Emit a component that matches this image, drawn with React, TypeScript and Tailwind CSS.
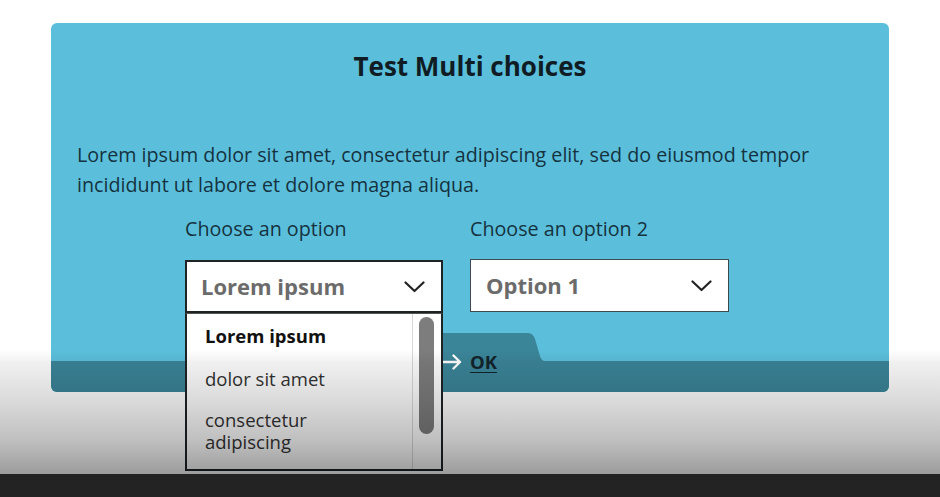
import React from "react";

function Chevron() {
  return (
    <svg width="21" height="12" viewBox="0 0 21 12" fill="none" className="shrink-0">
      <path d="M1.5 1.5 L10.5 10 L19.5 1.5" stroke="#222" strokeWidth="2.2" strokeLinecap="round" strokeLinejoin="round" />
    </svg>
  );
}

function Arrow() {
  return (
    <svg width="20" height="16" viewBox="0 0 20 16" fill="none" className="shrink-0">
      <path d="M1.5 8 H18 M11.5 1.5 L18 8 L11.5 14.5" stroke="#ffffff" strokeWidth="2.4" strokeLinecap="round" strokeLinejoin="round" />
    </svg>
  );
}

export default function App() {
  return (
    <div
      className="relative flex h-[497px] w-[940px] flex-col overflow-hidden bg-white"
      style={{ fontFamily: '"Open Sans", "Noto Sans", sans-serif' }}
    >
      <div className="flex-1 pt-[23px]">
        <div className="mx-auto w-[838px] rounded-[6px] bg-[#5bbfdb]">
          <div className="px-[26px] pt-[25px]">
            <h1 className="text-center text-[26px] font-bold leading-[36px] text-[#101c24]">
              Test Multi choices
            </h1>
            <p className="mt-[56px] text-[19.7px] leading-[30px] text-[#15323f]">
              Lorem ipsum dolor sit amet, consectetur adipiscing elit, sed do eiusmod tempor
              incididunt ut labore et dolore magna aliqua.
            </p>
            <div className="ml-[108px] mt-[16px] flex gap-[27px]">
              <div className="relative w-[258px]">
                <div className="text-[19.7px] leading-[26px] text-[#15323f]">Choose an option</div>
                <div className="mt-[18px] flex h-[53px] items-center justify-between border-2 border-[#1e2326] bg-white pl-[14px] pr-[16px]">
                  <span className="text-[22px] font-bold text-[#6b6b6b]">Lorem ipsum</span>
                  <Chevron />
                </div>
                <div className="absolute left-0 top-full z-10 flex h-[158px] w-[258px] overflow-hidden border-x-2 border-b-2 border-t border-[#1e2326] border-t-[#555] bg-white">
                  <div className="flex-1 text-[18.5px] text-[#333]">
                    <div className="px-[18px] py-[10px] font-bold leading-[23px] text-[#111]">
                      Lorem ipsum
                    </div>
                    <div className="px-[18px] py-[10px] leading-[23px]">dolor sit amet</div>
                    <div className="max-w-[170px] px-[18px] py-[9px] leading-[22px]">
                      consectetur adipiscing
                    </div>
                  </div>
                  <div className="w-[29px] border-l border-[#d8d8d8] pl-[6px] pt-[3px]">
                    <div className="h-[117px] w-[15px] rounded-full bg-[#7d7d7d]" />
                  </div>
                </div>
              </div>
              <div className="w-[259px]">
                <div className="text-[19.7px] leading-[26px] text-[#15323f]">Choose an option 2</div>
                <div className="mt-[17px] flex h-[53px] items-center justify-between border-[1.5px] border-[#3d4a50] bg-white pl-[15px] pr-[16px]">
                  <span className="text-[22px] font-bold text-[#6b6b6b]">Option 1</span>
                  <Chevron />
                </div>
              </div>
            </div>
          </div>
          <div className="mt-[20px] grid grid-cols-1 grid-rows-[28px_31px]">
            <div className="col-start-1 row-start-2 rounded-b-[6px] bg-[#3b8599]" />
            <div className="col-start-1 row-start-1 row-span-2 flex">
              <div className="ml-[369px] flex h-[28px] w-[105px] rounded-tl-[6px] bg-[#3b8599]" />
              <svg width="20" height="28" viewBox="0 0 20 28" className="shrink-0">
                <path d="M0 0 L3 0 Q8 0 10 6 L15 23 Q16.5 28 20 28 L0 28 Z" fill="#3b8599" />
              </svg>
            </div>
            <div className="col-start-1 row-start-1 row-span-2 ml-[391px] flex items-center gap-[8px] pb-[1px]">
              <Arrow />
              <span className="text-[18.5px] font-bold text-[#13242c] underline underline-offset-[3px]">
                OK
              </span>
            </div>
          </div>
        </div>
      </div>
      <div className="h-[23px] bg-[#232323]" />
      <div className="pointer-events-none absolute left-0 right-0 top-[350px] z-20 h-[124px] bg-[linear-gradient(180deg,rgba(0,0,0,0)_0%,rgba(0,0,0,0.06)_10%,rgba(0,0,0,0.14)_40%,rgba(0,0,0,0.25)_73%,rgba(0,0,0,0.39)_100%)]" />
    </div>
  );
}
